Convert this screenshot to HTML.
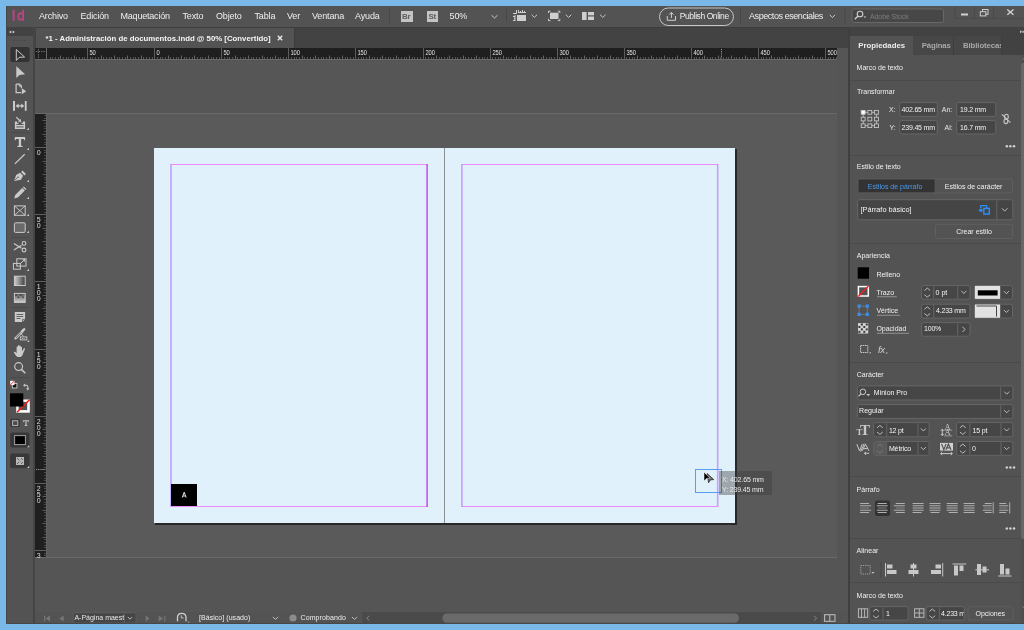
<!DOCTYPE html>
<html><head><meta charset="utf-8">
<style>
*{margin:0;padding:0;box-sizing:border-box}
html{will-change:transform}
html,body{width:1024px;height:630px;overflow:hidden;background:#7ab8e8;font-family:"Liberation Sans",sans-serif;color:#e0e0e0}
.a{position:absolute}
.t{position:absolute;white-space:nowrap;line-height:1}
</style></head><body>
<div class="a" style="left:6px;top:6px;width:1018px;height:618px;background:#535353"></div>
<!-- menubar -->
<div class="a" style="left:6px;top:6px;width:1018px;height:21px;background:#535353"></div>
<div class="a" style="left:6px;top:27px;width:1018px;height:1px;background:#3e3e3e"></div>

<!-- MENUBAR CONTENT -->
<svg class="a" style="left:6px;top:6px" width="30" height="21" viewBox="0 0 30 21">
<rect x="6.6" y="3.8" width="2.1" height="11" fill="#b5477f"/>
<path d="M17.15 3.8 V14.8 M17.15 8.9 C16.5 7.7 15.6 7.25 14.7 7.25 C13.2 7.25 12.35 8.8 12.35 10.6 C12.35 12.5 13.3 13.85 14.7 13.85 C15.6 13.85 16.5 13.4 17.15 12.3" fill="none" stroke="#b5477f" stroke-width="1.9"/>
</svg>
<div class="t" style="left:39px;top:12.3px;font-size:9px;letter-spacing:-0.15px;color:#eeeeee">Archivo</div>
<div class="t" style="left:80.5px;top:12.3px;font-size:9px;letter-spacing:-0.15px;color:#eeeeee">Edición</div>
<div class="t" style="left:120.5px;top:12.3px;font-size:9px;letter-spacing:-0.2px;color:#eeeeee">Maquetación</div>
<div class="t" style="left:182.5px;top:12.3px;font-size:9px;letter-spacing:-0.15px;color:#eeeeee">Texto</div>
<div class="t" style="left:216px;top:12.3px;font-size:9px;letter-spacing:-0.15px;color:#eeeeee">Objeto</div>
<div class="t" style="left:254.5px;top:12.3px;font-size:9px;letter-spacing:-0.15px;color:#eeeeee">Tabla</div>
<div class="t" style="left:287px;top:12.3px;font-size:9px;letter-spacing:-0.15px;color:#eeeeee">Ver</div>
<div class="t" style="left:312px;top:12.3px;font-size:9px;letter-spacing:-0.15px;color:#eeeeee">Ventana</div>
<div class="t" style="left:355px;top:12.3px;font-size:9px;letter-spacing:-0.15px;color:#eeeeee">Ayuda</div>
<div class="a" style="left:389px;top:9px;width:1px;height:14px;background:#474747"></div>
<div class="a" style="left:401px;top:11px;width:12px;height:11px;background:#c4c4c4"></div>
<div class="t" style="left:402px;top:13px;font-size:8px;font-weight:700;color:#5e5e5e;letter-spacing:-0.3px">Br</div>
<div class="a" style="left:427px;top:11px;width:11px;height:11px;background:#c4c4c4"></div>
<div class="t" style="left:428.5px;top:13px;font-size:8px;font-weight:700;color:#5e5e5e;letter-spacing:-0.3px">St</div>
<div class="t" style="left:449.5px;top:12.3px;font-size:9px;color:#eeeeee;letter-spacing:-0.1px">50%</div>
<svg class="a" style="left:0;top:0" width="1024" height="27" viewBox="0 0 1024 27">
<g fill="none" stroke="#c8c8c8" stroke-width="1">
<path d="M491.5 15.2 L494.5 18 L497.5 15.2"/>
<path d="M531.5 14.7 L534.3 17.4 L537.1 14.7"/>
<path d="M565.8 14.7 L568.6 17.4 L571.4 14.7"/>
<path d="M600 14.7 L602.8 17.4 L605.6 14.7"/>
<path d="M829.8 14.8 L832.4 17.6 L835 14.8"/>
</g>
<rect x="506" y="9" width="1" height="13" fill="#474747"/>
<rect x="740" y="9" width="1" height="14" fill="#474747"/>
<rect x="844.5" y="9" width="1" height="14" fill="#474747"/>
<!-- icon1 -->
<g fill="#cfcfcf">
<rect x="517" y="15" width="9" height="6"/>
<rect x="513" y="13" width="4" height="1"/><rect x="516" y="10" width="1" height="4"/>
<rect x="518" y="10" width="1" height="3"/><rect x="520" y="11" width="1" height="2"/><rect x="522" y="10" width="1" height="3"/><rect x="524" y="11" width="1" height="2"/><rect x="518" y="12" width="8" height="1"/>
<rect x="513" y="16" width="2" height="1"/><rect x="514" y="18" width="1" height="1"/><rect x="513" y="20" width="2" height="1"/><rect x="514.5" y="15" width="1" height="6"/>
<!-- icon2 -->
<rect x="550" y="12.7" width="8.5" height="6.3"/>
</g>
<path d="M548.5 13 V11.2 H550.5 M557.8 11.2 H559.8 V13 M559.8 18.8 V20.6 H557.8 M550.5 20.6 H548.5 V18.8" fill="none" stroke="#cfcfcf" stroke-width="1"/>
<g fill="#cfcfcf">
<rect x="582" y="12" width="4.6" height="8"/>
<rect x="588" y="12" width="6" height="3.3"/>
<rect x="588" y="16.5" width="6" height="3.5"/>
</g>
<!-- publish -->
<rect x="659.5" y="8" width="74" height="17.5" rx="8.75" fill="none" stroke="#c6c6c6" stroke-width="1"/>
<path d="M667.3 16 V20.3 H675.5 V16 M671.4 18 V12.5 M669.2 14.6 L671.4 12.4 L673.6 14.6" fill="none" stroke="#cfcfcf" stroke-width="1"/>
<!-- search -->
<rect x="852" y="9" width="91.5" height="13.5" rx="2" fill="#474747" stroke="#686868" stroke-width="1"/>
<circle cx="860" cy="14" r="2.8" fill="none" stroke="#cfcfcf" stroke-width="1.1"/>
<path d="M858 16 L854.8 19.2" stroke="#cfcfcf" stroke-width="1.3"/>
<path d="M863.5 16.5 H866.3 L864.9 18 Z" fill="#cfcfcf"/>
<!-- window controls -->
<path d="M955 6 V18.5 H1024 M974.5 6 V18.5 M993.5 6 V18.5" fill="none" stroke="#4b4b4b" stroke-width="1"/>
<rect x="961" y="13.5" width="7" height="2" fill="#cfcfcf"/>
<rect x="982.5" y="9.5" width="5.5" height="4.8" fill="none" stroke="#cfcfcf" stroke-width="1"/>
<rect x="980.3" y="11.7" width="5.5" height="4.2" fill="#535353" stroke="#cfcfcf" stroke-width="1"/>
<path d="M1007.3 9.5 L1013.5 14.8 M1013.5 9.5 L1007.3 14.8" stroke="#d4d4d4" stroke-width="1.3"/>
</svg>
<div class="t" style="left:679.8px;top:12.3px;font-size:8.5px;color:#eeeeee;letter-spacing:-0.42px">Publish Online</div>
<div class="t" style="left:749px;top:11.5px;font-size:9px;color:#eeeeee;letter-spacing:-0.43px">Aspectos esenciales</div>
<div class="t" style="left:870px;top:12.5px;font-size:7px;color:#7c7c7c;letter-spacing:-0.1px">Adobe Stock</div>

<!-- left toolbar -->
<div class="a" style="left:6px;top:27px;width:27px;height:597px;background:#535353"></div>
<div class="a" style="left:33px;top:27px;width:2px;height:597px;background:#454545"></div>

<!-- TOOLBAR CONTENT -->
<svg class="a" style="left:6px;top:27px" width="27" height="450" viewBox="6 27 27 450">
<rect x="6" y="27" width="27" height="9" fill="#424242"/>
<path d="M9.7 30.5 L12 32 L9.7 33.4 Z M12.6 30.5 L14.9 32 L12.6 33.4 Z" fill="#d0d0d0"/>
<path d="M13 40.3 H27" stroke="#474747" stroke-width="1" stroke-dasharray="2 1.5"/>
<rect x="10.3" y="47.1" width="19.3" height="15" rx="2" fill="#333333"/>
<path d="M16.3 49.5 V60.5 L19.2 57.3 L24.6 57.1 Z" fill="none" stroke="#cacaca" stroke-width="1" stroke-linejoin="miter"/>
<path d="M16.3 66.2 V78 L19.4 75 L25.1 74.3 Z" fill="#cacaca"/>
<path d="M16.1 84.1 H19.5 L21.4 86 V88.3 M16.1 84.1 V92.7 H21.2" fill="none" stroke="#cacaca" stroke-width="1.2"/>
<path d="M19.3 84.1 V86.2 H21.4" fill="none" stroke="#cacaca" stroke-width="0.9"/>
<path d="M21.8 88.3 L26.2 91.3 L21.8 94.3 Z" fill="#cacaca"/>
<rect x="13" y="101" width="2" height="9.8" fill="#cacaca"/>
<rect x="24.8" y="101" width="1.8" height="9.8" fill="#cacaca"/>
<path d="M17 105.9 H22.8" stroke="#cacaca" stroke-width="1.3"/>
<path d="M15.5 105.9 L18.6 103.6 V108.2 Z M24.3 105.9 L21.2 103.6 V108.2 Z" fill="#cacaca"/>
<path d="M14.9 121.4 H17 V122.8 H23 V121.4 H25.1 V128.9 H14.9 Z" fill="#cacaca"/>
<rect x="16.3" y="124" width="7.4" height="1" fill="#5a5a5a"/>
<rect x="16.3" y="126.3" width="7.4" height="1.2" fill="#6a6a6a"/>
<rect x="18.5" y="122.8" width="3" height="1.2" fill="#444"/>
<path d="M16.3 117.3 L19.6 120.4" stroke="#cacaca" stroke-width="1.3"/>
<path d="M21.2 122 L17.9 121.4 L20.6 118.7 Z" fill="#cacaca"/>
<path d="M29 130 H26.8 L29 127.8 Z" fill="#cacaca"/>
<rect x="11" y="132" width="18" height="1" fill="#4a4a4a"/>
<path d="M14.8 137.1 H25.1 V140.3 H24.3 L23.8 138.9 H21.1 V145.7 L22.6 146.1 V147.1 H17.3 V146.1 L18.8 145.7 V138.9 H16.1 L15.6 140.3 H14.8 Z" fill="#cacaca"/>
<path d="M29 150 H26.8 L29 147.8 Z" fill="#cacaca"/>
<path d="M14.9 163.9 L24.7 154.3" stroke="#cacaca" stroke-width="1.3"/>
<path d="M14.1 180.9 L16.1 174.9 L20.1 172.8 L23.1 175.8 L21 179.8 Z" fill="#cacaca"/>
<path d="M21.1 172 L22.5 170.6 L25.9 174 L24.5 175.4 Z" fill="#cacaca"/>
<path d="M14.6 180.4 L17.7 177.5" stroke="#5a5a5a" stroke-width="0.8"/>
<circle cx="18" cy="177.2" r="0.7" fill="#5a5a5a"/>
<path d="M29 182 H26.8 L29 179.8 Z" fill="#cacaca"/>
<path d="M14.2 198.6 L15.2 195.1 L22.2 188.1 L24.8 190.6 L17.8 197.6 Z" fill="#cacaca"/>
<path d="M22.9 187.4 L23.8 186.6 L26.3 189.1 L25.5 189.9 Z" fill="#cacaca"/>
<path d="M29 199 H26.8 L29 196.8 Z" fill="#cacaca"/>
<rect x="14.4" y="205.9" width="10.8" height="9.4" fill="none" stroke="#cacaca" stroke-width="1"/>
<path d="M14.4 205.9 L25.2 215.3 M25.2 205.9 L14.4 215.3" stroke="#cacaca" stroke-width="0.9"/>
<path d="M29 216 H26.8 L29 213.8 Z" fill="#cacaca"/>
<rect x="14.4" y="222.8" width="10.8" height="9.6" rx="1" fill="#6a6a6a" stroke="#cacaca" stroke-width="1"/>
<path d="M29 233 H26.8 L29 230.8 Z" fill="#cacaca"/>
<rect x="11" y="237" width="18" height="1" fill="#4a4a4a"/>
<path d="M13.9 243.5 L21.5 248.2 M13.9 249.9 L21.5 245.3" stroke="#cacaca" stroke-width="1.2"/>
<circle cx="24" cy="243.4" r="1.9" fill="none" stroke="#cacaca" stroke-width="1.1"/>
<circle cx="24" cy="250" r="1.9" fill="none" stroke="#cacaca" stroke-width="1.1"/>
<rect x="16.8" y="258.8" width="9.2" height="7.3" fill="none" stroke="#cacaca" stroke-width="1"/>
<rect x="13.4" y="263.4" width="7" height="5.8" fill="none" stroke="#cacaca" stroke-width="1"/>
<path d="M20.5 263.5 L24.6 259.6" stroke="#cacaca" stroke-width="1"/>
<path d="M25.2 259.1 L22.3 259.6 L24.6 262 Z" fill="#cacaca"/>
<path d="M29 271 H26.8 L29 268.8 Z" fill="#cacaca"/>
<defs><linearGradient id="gr1" x1="0" x2="1"><stop offset="0" stop-color="#cfcfcf"/><stop offset="1" stop-color="#3e3e3e"/></linearGradient>
<linearGradient id="gr2" x1="0" x2="0" y1="0" y2="1"><stop offset="0" stop-color="#555"/><stop offset="1" stop-color="#d0d0d0"/></linearGradient></defs>
<rect x="14.4" y="276.2" width="10.8" height="9.3" fill="url(#gr1)" stroke="#cacaca" stroke-width="1"/>
<rect x="14.4" y="293.4" width="10.8" height="9" fill="url(#gr2)" stroke="#cacaca" stroke-width="1"/><rect x="15.3" y="294.3" width="1.6" height="1.6" fill="#3a3a3a" opacity="0.8"/><rect x="17.6" y="296.5" width="1.6" height="1.6" fill="#3a3a3a" opacity="0.8"/><rect x="19.9" y="294.3" width="1.6" height="1.6" fill="#3a3a3a" opacity="0.8"/><rect x="22.2" y="296.5" width="1.6" height="1.6" fill="#3a3a3a" opacity="0.8"/>
<rect x="11" y="307" width="18" height="1" fill="#4a4a4a"/>
<path d="M14.8 311.9 H25.1 V319.3 L22.5 321.9 H14.8 Z" fill="#cacaca"/>
<path d="M16.5 314.5 H23.3 M16.5 316.5 H23.3 M16.5 318.5 H20.5" stroke="#555" stroke-width="0.9"/>
<path d="M22.5 321.9 V319.3 H25.1" fill="none" stroke="#555" stroke-width="0.8"/>
<path d="M15.5 338.3 L22 331.8" stroke="#cacaca" stroke-width="2.4" stroke-linecap="round"/>
<path d="M15.9 337.9 L21.5 332.3" stroke="#535353" stroke-width="0.9"/>
<path d="M21 330.5 L24.2 327.8 L25.6 329.2 L23 332.4 Z" fill="#cacaca"/>
<path d="M20.3 333 L23.5 336.2" stroke="#cacaca" stroke-width="1"/>
<rect x="20.3" y="336.9" width="6.5" height="3" fill="none" stroke="#cacaca" stroke-width="0.9"/>
<path d="M21.8 338.4 H25.5" stroke="#cacaca" stroke-width="1" stroke-dasharray="1 0.8"/>
<path d="M29.2 342 H27.0 L29.2 339.8 Z" fill="#cacaca"/>
<path d="M17.3 356.9 C15.8 355.6 14.6 353.9 13.9 352.6 C13.6 351.9 14.6 351.4 15.3 352.1 L16.6 353.2 V347.1 C16.6 346.2 17.9 346.2 17.9 347.1 V351 V345.8 C17.9 344.9 19.3 344.9 19.3 345.8 V351 V346.1 C19.3 345.2 20.7 345.2 20.7 346.1 V351 V347.3 C20.7 346.5 22 346.5 22 347.3 V351.5 L23.7 348.6 C24.2 347.8 25.4 348.2 25 349.1 L22.6 354.8 C22.1 356.1 21.3 356.9 20.3 356.9 Z" fill="#cacaca"/>
<circle cx="18.6" cy="366.6" r="3.9" fill="none" stroke="#cacaca" stroke-width="1.2"/>
<path d="M21.4 369.4 L25.3 373.3" stroke="#cacaca" stroke-width="1.5"/>
<rect x="11" y="377" width="18" height="1" fill="#4a4a4a"/>
<rect x="12.3" y="383.4" width="4.6" height="4.6" fill="#111" stroke="#d0d0d0" stroke-width="0.9"/>
<rect x="10.2" y="380.8" width="4.3" height="4.3" fill="#fff"/>
<path d="M10.3 385 L14.4 380.9" stroke="#ff2020" stroke-width="1"/>
<path d="M25 385.3 H26.3 Q27.8 385.3 27.8 386.8 V388.4" fill="none" stroke="#cacaca" stroke-width="1.1"/>
<path d="M23 385.3 L25.2 383.6 V387 Z M27.8 390.6 L26.1 388.3 H29.5 Z" fill="#cacaca"/>
<rect x="16.2" y="399.5" width="13.6" height="13.2" fill="#ffffff"/>
<rect x="18.6" y="401.9" width="8.6" height="8.2" fill="#535353"/>
<path d="M17 412.3 L29.6 399.7" stroke="#ff1a1a" stroke-width="1.5"/>
<rect x="10" y="393.3" width="13.3" height="13.2" fill="#000000"/>
<rect x="10.3" y="418.8" width="9.7" height="8.2" rx="1.5" fill="#3a3a3a"/>
<rect x="12.6" y="420.8" width="5.2" height="4.6" fill="#4a4a4a" stroke="#c0c0c0" stroke-width="0.9"/>
<path d="M23 420.3 H29 V422.3 H28.5 L28.2 421.3 H26.6 V425 L27.4 425.3 V426 H24.6 V425.3 L25.4 425 V421.3 H23.8 L23.5 422.3 H23 Z" fill="#c0c0c0"/>
<rect x="10.2" y="432.6" width="19.3" height="14.9" rx="2" fill="#383838"/>
<rect x="14.6" y="435.6" width="10.8" height="9" fill="#000" stroke="#a0a0a0" stroke-width="1"/>
<path d="M29.2 447.2 H27.0 L29.2 445.0 Z" fill="#cacaca"/>
<rect x="10.2" y="453.4" width="19.3" height="14.9" rx="2" fill="#383838"/>
<rect x="16" y="457" width="8" height="8" fill="#b8b8b8"/>
<path d="M17 458 L19 460 M21 458 L23 460 M17 464 L19 462 M21 464 L23 462 M19.5 460.5 L20.5 461.5" stroke="#555" stroke-width="0.9"/>
<path d="M29.2 468 H27.0 L29.2 465.8 Z" fill="#cacaca"/>
</svg>
<!-- tab bar -->
<div class="a" style="left:35px;top:28px;width:813px;height:20px;background:#434343"></div>
<div class="a" style="left:36px;top:28px;width:258px;height:20px;background:#535353"></div>
<div class="a" style="left:294px;top:28px;width:1px;height:20px;background:#3c3c3c"></div>

<!-- TAB CONTENT -->
<div class="t" style="left:45.5px;top:35px;font-size:7.8px;font-weight:700;color:#f4f4f4">*1 - Administración de documentos.indd @ 50% [Convertido]</div>
<svg class="a" style="left:276px;top:34px" width="10" height="10" viewBox="0 0 10 10"><path d="M1.8 1.8 L6.2 6.2 M6.2 1.8 L1.8 6.2" stroke="#e8e8e8" stroke-width="1.4"/></svg>
<!-- rulers -->
<div class="a" style="left:35px;top:59px;width:802px;height:553px;background:#5a5a5a"></div>
<div class="a" style="left:35px;top:59px;width:802px;height:54px;background:#565656"></div>
<div class="a" style="left:35px;top:558px;width:802px;height:54px;background:#555555"></div>
<div class="a" style="left:35px;top:113px;width:802px;height:1px;background:#6a6a6a"></div>
<div class="a" style="left:35px;top:557px;width:802px;height:1px;background:#6a6a6a"></div>
<svg class="a" style="left:35px;top:48px" width="802" height="12" viewBox="35 48 802 12">
<rect x="35" y="48" width="802" height="11" fill="#1f1f1f"/>
<rect x="35" y="59" width="802" height="1" fill="#6a6a6a"/>
<rect x="46" y="48" width="1" height="11" fill="#6a6a6a"/>
<path d="M38.5 49 V58 M36 51.5 H45" stroke="#6a6a6a" stroke-width="1" stroke-dasharray="1.5 1" fill="none"/>
<path d="M50.5 57 V59 M52.5 57 V59 M55.5 57 V59 M58.5 57 V59 M63.5 57 V59 M66.5 57 V59 M68.5 57 V59 M71.5 57 V59 M76.5 57 V59 M79.5 57 V59 M82.5 57 V59 M84.5 57 V59 M90.5 57 V59 M92.5 57 V59 M95.5 57 V59 M98.5 57 V59 M103.5 57 V59 M106.5 57 V59 M109.5 57 V59 M111.5 57 V59 M117.5 57 V59 M119.5 57 V59 M122.5 57 V59 M125.5 57 V59 M130.5 57 V59 M133.5 57 V59 M135.5 57 V59 M138.5 57 V59 M143.5 57 V59 M146.5 57 V59 M149.5 57 V59 M152.5 57 V59 M157.5 57 V59 M160.5 57 V59 M162.5 57 V59 M165.5 57 V59 M170.5 57 V59 M173.5 57 V59 M176.5 57 V59 M178.5 57 V59 M184.5 57 V59 M186.5 57 V59 M189.5 57 V59 M192.5 57 V59 M197.5 57 V59 M200.5 57 V59 M202.5 57 V59 M205.5 57 V59 M211.5 57 V59 M213.5 57 V59 M216.5 57 V59 M219.5 57 V59 M224.5 57 V59 M227.5 57 V59 M229.5 57 V59 M232.5 57 V59 M237.5 57 V59 M240.5 57 V59 M243.5 57 V59 M245.5 57 V59 M251.5 57 V59 M253.5 57 V59 M256.5 57 V59 M259.5 57 V59 M264.5 57 V59 M267.5 57 V59 M270.5 57 V59 M272.5 57 V59 M278.5 57 V59 M280.5 57 V59 M283.5 57 V59 M286.5 57 V59 M291.5 57 V59 M294.5 57 V59 M296.5 57 V59 M299.5 57 V59 M304.5 57 V59 M307.5 57 V59 M310.5 57 V59 M313.5 57 V59 M318.5 57 V59 M321.5 57 V59 M323.5 57 V59 M326.5 57 V59 M331.5 57 V59 M334.5 57 V59 M337.5 57 V59 M339.5 57 V59 M345.5 57 V59 M347.5 57 V59 M350.5 57 V59 M353.5 57 V59 M358.5 57 V59 M361.5 57 V59 M363.5 57 V59 M366.5 57 V59 M372.5 57 V59 M374.5 57 V59 M377.5 57 V59 M380.5 57 V59 M385.5 57 V59 M388.5 57 V59 M390.5 57 V59 M393.5 57 V59 M398.5 57 V59 M401.5 57 V59 M404.5 57 V59 M406.5 57 V59 M412.5 57 V59 M414.5 57 V59 M417.5 57 V59 M420.5 57 V59 M425.5 57 V59 M428.5 57 V59 M431.5 57 V59 M433.5 57 V59 M439.5 57 V59 M441.5 57 V59 M444.5 57 V59 M447.5 57 V59 M452.5 57 V59 M455.5 57 V59 M457.5 57 V59 M460.5 57 V59 M465.5 57 V59 M468.5 57 V59 M471.5 57 V59 M474.5 57 V59 M479.5 57 V59 M482.5 57 V59 M484.5 57 V59 M487.5 57 V59 M492.5 57 V59 M495.5 57 V59 M498.5 57 V59 M500.5 57 V59 M506.5 57 V59 M508.5 57 V59 M511.5 57 V59 M514.5 57 V59 M519.5 57 V59 M522.5 57 V59 M524.5 57 V59 M527.5 57 V59 M533.5 57 V59 M535.5 57 V59 M538.5 57 V59 M541.5 57 V59 M546.5 57 V59 M549.5 57 V59 M551.5 57 V59 M554.5 57 V59 M559.5 57 V59 M562.5 57 V59 M565.5 57 V59 M567.5 57 V59 M573.5 57 V59 M575.5 57 V59 M578.5 57 V59 M581.5 57 V59 M586.5 57 V59 M589.5 57 V59 M592.5 57 V59 M594.5 57 V59 M600.5 57 V59 M602.5 57 V59 M605.5 57 V59 M608.5 57 V59 M613.5 57 V59 M616.5 57 V59 M618.5 57 V59 M621.5 57 V59 M626.5 57 V59 M629.5 57 V59 M632.5 57 V59 M634.5 57 V59 M640.5 57 V59 M643.5 57 V59 M645.5 57 V59 M648.5 57 V59 M653.5 57 V59 M656.5 57 V59 M659.5 57 V59 M661.5 57 V59 M667.5 57 V59 M669.5 57 V59 M672.5 57 V59 M675.5 57 V59 M680.5 57 V59 M683.5 57 V59 M685.5 57 V59 M688.5 57 V59 M694.5 57 V59 M696.5 57 V59 M699.5 57 V59 M702.5 57 V59 M707.5 57 V59 M710.5 57 V59 M712.5 57 V59 M715.5 57 V59 M720.5 57 V59 M723.5 57 V59 M726.5 57 V59 M728.5 57 V59 M734.5 57 V59 M736.5 57 V59 M739.5 57 V59 M742.5 57 V59 M747.5 57 V59 M750.5 57 V59 M753.5 57 V59 M755.5 57 V59 M761.5 57 V59 M763.5 57 V59 M766.5 57 V59 M769.5 57 V59 M774.5 57 V59 M777.5 57 V59 M779.5 57 V59 M782.5 57 V59 M787.5 57 V59 M790.5 57 V59 M793.5 57 V59 M795.5 57 V59 M801.5 57 V59 M804.5 57 V59 M806.5 57 V59 M809.5 57 V59 M814.5 57 V59 M817.5 57 V59 M820.5 57 V59 M822.5 57 V59 M828.5 57 V59 M830.5 57 V59 M833.5 57 V59 M836.5 57 V59" stroke="#555555" stroke-width="1" fill="none"/>
<path d="M60.5 55.5 V59 M74.5 55.5 V59 M101.5 55.5 V59 M114.5 55.5 V59 M127.5 55.5 V59 M141.5 55.5 V59 M168.5 55.5 V59 M181.5 55.5 V59 M194.5 55.5 V59 M208.5 55.5 V59 M235.5 55.5 V59 M248.5 55.5 V59 M262.5 55.5 V59 M275.5 55.5 V59 M302.5 55.5 V59 M315.5 55.5 V59 M329.5 55.5 V59 M342.5 55.5 V59 M369.5 55.5 V59 M382.5 55.5 V59 M396.5 55.5 V59 M409.5 55.5 V59 M436.5 55.5 V59 M449.5 55.5 V59 M463.5 55.5 V59 M476.5 55.5 V59 M503.5 55.5 V59 M516.5 55.5 V59 M530.5 55.5 V59 M543.5 55.5 V59 M570.5 55.5 V59 M584.5 55.5 V59 M597.5 55.5 V59 M610.5 55.5 V59 M637.5 55.5 V59 M651.5 55.5 V59 M664.5 55.5 V59 M677.5 55.5 V59 M704.5 55.5 V59 M718.5 55.5 V59 M731.5 55.5 V59 M745.5 55.5 V59 M771.5 55.5 V59 M785.5 55.5 V59 M798.5 55.5 V59 M812.5 55.5 V59" stroke="#636363" stroke-width="1" fill="none"/>
<path d="M87.5 48 V59 M154.5 48 V59 M221.5 48 V59 M288.5 48 V59 M355.5 48 V59 M423.5 48 V59 M490.5 48 V59 M557.5 48 V59 M624.5 48 V59 M691.5 48 V59 M758.5 48 V59 M825.5 48 V59" stroke="#5c5c5c" stroke-width="1" fill="none"/>
<text transform="translate(89.4 54.9) scale(0.84 1)" font-size="6.9" fill="#e0e0e0" font-family="Liberation Sans">50</text>
<text transform="translate(156.4 54.9) scale(0.84 1)" font-size="6.9" fill="#e0e0e0" font-family="Liberation Sans">0</text>
<text transform="translate(223.4 54.9) scale(0.84 1)" font-size="6.9" fill="#e0e0e0" font-family="Liberation Sans">50</text>
<text transform="translate(290.4 54.9) scale(0.84 1)" font-size="6.9" fill="#e0e0e0" font-family="Liberation Sans">100</text>
<text transform="translate(357.4 54.9) scale(0.84 1)" font-size="6.9" fill="#e0e0e0" font-family="Liberation Sans">150</text>
<text transform="translate(425.4 54.9) scale(0.84 1)" font-size="6.9" fill="#e0e0e0" font-family="Liberation Sans">200</text>
<text transform="translate(492.4 54.9) scale(0.84 1)" font-size="6.9" fill="#e0e0e0" font-family="Liberation Sans">250</text>
<text transform="translate(559.4 54.9) scale(0.84 1)" font-size="6.9" fill="#e0e0e0" font-family="Liberation Sans">300</text>
<text transform="translate(626.4 54.9) scale(0.84 1)" font-size="6.9" fill="#e0e0e0" font-family="Liberation Sans">350</text>
<text transform="translate(693.4 54.9) scale(0.84 1)" font-size="6.9" fill="#e0e0e0" font-family="Liberation Sans">400</text>
<text transform="translate(760.4 54.9) scale(0.84 1)" font-size="6.9" fill="#e0e0e0" font-family="Liberation Sans">450</text>
<text transform="translate(827.4 54.9) scale(0.84 1)" font-size="6.9" fill="#e0e0e0" font-family="Liberation Sans">500</text>
<path d="M841 54.5 L843 52.5 L845 54.5" fill="none" stroke="#6a6a6a" stroke-width="0.8"/>
<path d="M721.5 49 V58.5" stroke="#9a9a9a" stroke-width="1" stroke-dasharray="1.2 1"/></svg>
<svg class="a" style="left:35px;top:113px" width="12" height="445" viewBox="35 113 12 445">
<rect x="35" y="114" width="11" height="443" fill="#1f1f1f"/>
<rect x="46" y="114" width="1" height="443" fill="#626262"/>
<path d="M44 115.5 H46 M44 118.5 H46 M44 123.5 H46 M44 126.5 H46 M44 128.5 H46 M44 131.5 H46 M44 136.5 H46 M44 139.5 H46 M44 142.5 H46 M44 144.5 H46 M44 150.5 H46 M44 152.5 H46 M44 155.5 H46 M44 158.5 H46 M44 163.5 H46 M44 166.5 H46 M44 169.5 H46 M44 171.5 H46 M44 177.5 H46 M44 179.5 H46 M44 182.5 H46 M44 185.5 H46 M44 190.5 H46 M44 193.5 H46 M44 195.5 H46 M44 198.5 H46 M44 204.5 H46 M44 206.5 H46 M44 209.5 H46 M44 212.5 H46 M44 217.5 H46 M44 220.5 H46 M44 222.5 H46 M44 225.5 H46 M44 230.5 H46 M44 233.5 H46 M44 236.5 H46 M44 238.5 H46 M44 244.5 H46 M44 247.5 H46 M44 249.5 H46 M44 252.5 H46 M44 257.5 H46 M44 260.5 H46 M44 263.5 H46 M44 265.5 H46 M44 271.5 H46 M44 273.5 H46 M44 276.5 H46 M44 279.5 H46 M44 284.5 H46 M44 287.5 H46 M44 289.5 H46 M44 292.5 H46 M44 298.5 H46 M44 300.5 H46 M44 303.5 H46 M44 306.5 H46 M44 311.5 H46 M44 314.5 H46 M44 316.5 H46 M44 319.5 H46 M44 324.5 H46 M44 327.5 H46 M44 330.5 H46 M44 332.5 H46 M44 338.5 H46 M44 341.5 H46 M44 343.5 H46 M44 346.5 H46 M44 351.5 H46 M44 354.5 H46 M44 357.5 H46 M44 359.5 H46 M44 365.5 H46 M44 367.5 H46 M44 370.5 H46 M44 373.5 H46 M44 378.5 H46 M44 381.5 H46 M44 384.5 H46 M44 386.5 H46 M44 392.5 H46 M44 394.5 H46 M44 397.5 H46 M44 400.5 H46 M44 405.5 H46 M44 408.5 H46 M44 410.5 H46 M44 413.5 H46 M44 418.5 H46 M44 421.5 H46 M44 424.5 H46 M44 427.5 H46 M44 432.5 H46 M44 435.5 H46 M44 437.5 H46 M44 440.5 H46 M44 445.5 H46 M44 448.5 H46 M44 451.5 H46 M44 453.5 H46 M44 459.5 H46 M44 461.5 H46 M44 464.5 H46 M44 467.5 H46 M44 472.5 H46 M44 475.5 H46 M44 478.5 H46 M44 480.5 H46 M44 486.5 H46 M44 488.5 H46 M44 491.5 H46 M44 494.5 H46 M44 499.5 H46 M44 502.5 H46 M44 504.5 H46 M44 507.5 H46 M44 512.5 H46 M44 515.5 H46 M44 518.5 H46 M44 521.5 H46 M44 526.5 H46 M44 529.5 H46 M44 531.5 H46 M44 534.5 H46 M44 539.5 H46 M44 542.5 H46 M44 545.5 H46 M44 547.5 H46 M44 553.5 H46 M44 555.5 H46" stroke="#4a4a4a" stroke-width="1" fill="none"/>
<path d="M42.5 120.5 H46 M42.5 134.5 H46 M42.5 161.5 H46 M42.5 174.5 H46 M42.5 187.5 H46 M42.5 201.5 H46 M42.5 228.5 H46 M42.5 241.5 H46 M42.5 255.5 H46 M42.5 268.5 H46 M42.5 295.5 H46 M42.5 308.5 H46 M42.5 322.5 H46 M42.5 335.5 H46 M42.5 362.5 H46 M42.5 375.5 H46 M42.5 389.5 H46 M42.5 402.5 H46 M42.5 429.5 H46 M42.5 443.5 H46 M42.5 456.5 H46 M42.5 469.5 H46 M42.5 496.5 H46 M42.5 510.5 H46 M42.5 523.5 H46 M42.5 537.5 H46" stroke="#5a5a5a" stroke-width="1" fill="none"/>
<path d="M35 147.5 H46 M35 214.5 H46 M35 281.5 H46 M35 349.5 H46 M35 416.5 H46 M35 483.5 H46 M35 550.5 H46" stroke="#5e5e5e" stroke-width="1" fill="none"/>
<text x="36.8" y="154.8" font-size="7" fill="#dedede" font-family="Liberation Sans">0</text>
<text x="36.8" y="221.8" font-size="7" fill="#dedede" font-family="Liberation Sans">5</text>
<text x="36.8" y="228.0" font-size="7" fill="#dedede" font-family="Liberation Sans">0</text>
<text x="36.8" y="288.8" font-size="7" fill="#dedede" font-family="Liberation Sans">1</text>
<text x="36.8" y="295.0" font-size="7" fill="#dedede" font-family="Liberation Sans">0</text>
<text x="36.8" y="301.2" font-size="7" fill="#dedede" font-family="Liberation Sans">0</text>
<text x="36.8" y="356.8" font-size="7" fill="#dedede" font-family="Liberation Sans">1</text>
<text x="36.8" y="363.0" font-size="7" fill="#dedede" font-family="Liberation Sans">5</text>
<text x="36.8" y="369.2" font-size="7" fill="#dedede" font-family="Liberation Sans">0</text>
<text x="36.8" y="423.8" font-size="7" fill="#dedede" font-family="Liberation Sans">2</text>
<text x="36.8" y="430.0" font-size="7" fill="#dedede" font-family="Liberation Sans">0</text>
<text x="36.8" y="436.2" font-size="7" fill="#dedede" font-family="Liberation Sans">0</text>
<text x="36.8" y="490.8" font-size="7" fill="#dedede" font-family="Liberation Sans">2</text>
<text x="36.8" y="497.0" font-size="7" fill="#dedede" font-family="Liberation Sans">5</text>
<text x="36.8" y="503.2" font-size="7" fill="#dedede" font-family="Liberation Sans">0</text>
<text x="36.8" y="557.8" font-size="7" fill="#dedede" font-family="Liberation Sans">3</text>
<text x="36.8" y="564.0" font-size="7" fill="#dedede" font-family="Liberation Sans">0</text>
<text x="36.8" y="570.2" font-size="7" fill="#dedede" font-family="Liberation Sans">0</text>
<path d="M36 469.5 H45" stroke="#9a9a9a" stroke-width="1" stroke-dasharray="1.2 1"/></svg>
<!-- vscroll -->
<div class="a" style="left:837px;top:48px;width:11px;height:564px;background:#555555"></div>
<!-- status bar -->
<div class="a" style="left:35px;top:612px;width:813px;height:12px;background:#535353"></div>
<svg class="a" style="left:35px;top:606px" width="813" height="18" viewBox="35 606 813 18">
<rect x="362.3" y="612.2" width="458.6" height="11" fill="#4a4a4a"/>
<rect x="442.3" y="613.4" width="296.7" height="9.4" rx="4.7" fill="#6a6a6a"/>
<path d="M369.3 615.8 L366.8 618.2 L369.3 620.6 M814 615.8 L816.6 618.2 L814 620.6" fill="none" stroke="#8a8a8a" stroke-width="0.9"/>
<rect x="824.6" y="614.7" width="10.4" height="6.6" fill="none" stroke="#c0c0c0" stroke-width="1"/>
<rect x="829.3" y="614.7" width="1" height="6.6" fill="#c0c0c0"/>
<path d="M840 622.5 L846.5 616 M843 622.5 L846.5 619" stroke="#5e5e5e" stroke-width="0.8"/>
<g fill="#767676">
<rect x="44" y="615.6" width="1.2" height="6"/><path d="M50 615.6 V621.6 L45.6 618.6 Z"/>
<path d="M63.7 615.6 V621.6 L59.3 618.6 Z"/>
<path d="M145.7 615.6 V621.6 L149.5 618.6 Z"/>
<path d="M158.7 615.6 V621.6 L163.2 618.6 Z"/><rect x="164.2" y="615.6" width="1.2" height="6"/>
</g>
<rect x="73.1" y="612.7" width="63" height="10.4" rx="2" fill="#464646" stroke="#5f5f5f" stroke-width="1"/>
<rect x="123.9" y="613.2" width="1" height="9.6" fill="#5f5f5f"/>
<path d="M127.8 617 L130 619.2 L132.2 617" fill="none" stroke="#c8c8c8" stroke-width="0.9"/>
<path d="M272.8 617 L275.5 619.4 L278.2 617 M352 617 L354.6 619.4 L357.2 617" fill="none" stroke="#c8c8c8" stroke-width="0.9"/>
<circle cx="293" cy="618" r="3.6" fill="#8c8c8c"/>
<path d="M177.5 621.3 V617.5 C177.5 614.8 179.5 613.3 181.7 613.3 C184 613.3 186 614.8 186 617.5 V621.3" fill="none" stroke="#cfcfcf" stroke-width="1.3"/>
<path d="M181.3 615.3 V618 H183.5" fill="none" stroke="#cfcfcf" stroke-width="0.9"/>
<path d="M187.5 621.8 H189.5 L188.5 622.8 Z" fill="#cfcfcf"/>
</svg>
<div class="a" style="left:74px;top:613px;width:49.5px;height:10px;overflow:hidden"><div class="t" style="left:0.4px;top:1.4px;font-size:7px;color:#e8e8e8">A-Página maestra</div></div>
<div class="t" style="left:199px;top:614.1px;font-size:7px;color:#eeeeee;letter-spacing:0.05px">[Básico] (usado)</div>
<div class="t" style="left:300.5px;top:614.1px;font-size:7px;color:#eeeeee;letter-spacing:0.1px">Comprobando</div>
<div class="a" style="left:848px;top:27px;width:2px;height:597px;background:#3f3f3f"></div>
<!-- right panel -->
<!-- PANEL CONTENT -->
<svg class="a" style="left:850px;top:27px" width="174" height="597" viewBox="850 27 174 597">
<rect x="850" y="27" width="174" height="28" fill="#424242"/>
<path d="M1020 30.3 L1022 31.8 L1020 33.3 Z M1022.5 30.3 L1024.5 31.8 L1022.5 33.3 Z" fill="#c8c8c8"/>
<rect x="850" y="36" width="63" height="19" fill="#535353"/>
<rect x="913" y="36" width="41" height="19" fill="#474747"/>
<rect x="954" y="36" width="47" height="19" fill="#474747"/>
<rect x="953" y="36" width="1" height="19" fill="#3e3e3e"/>
<rect x="1001" y="36" width="1" height="19" fill="#3e3e3e"/>
<rect x="1021" y="55" width="3" height="569" fill="#4e4e4e"/>
<rect x="1021" y="63" width="4" height="476" rx="2" fill="#676767"/>
<path d="M1022 60 L1023.5 58.5 L1025 60" fill="none" stroke="#888" stroke-width="0.8"/>
<path d="M1022 606 L1023.5 607.5 L1025 606" fill="none" stroke="#888" stroke-width="0.8"/>
<rect x="850" y="80" width="171" height="1" fill="#4a4a4a"/>
<rect x="861.2" y="110.5" width="3.9" height="3.7" fill="#ffffff" stroke="#cfcfcf" stroke-width="0.8"/>
<rect x="867.9" y="110.5" width="3.9" height="3.7" fill="none" stroke="#cfcfcf" stroke-width="0.8"/>
<rect x="874.6" y="110.5" width="3.9" height="3.7" fill="none" stroke="#cfcfcf" stroke-width="0.8"/>
<rect x="861.2" y="117.2" width="3.9" height="3.7" fill="none" stroke="#cfcfcf" stroke-width="0.8"/>
<rect x="867.9" y="117.2" width="3.9" height="3.7" fill="none" stroke="#cfcfcf" stroke-width="0.8"/>
<rect x="874.6" y="117.2" width="3.9" height="3.7" fill="none" stroke="#cfcfcf" stroke-width="0.8"/>
<rect x="861.2" y="123.9" width="3.9" height="3.7" fill="none" stroke="#cfcfcf" stroke-width="0.8"/>
<rect x="867.9" y="123.9" width="3.9" height="3.7" fill="none" stroke="#cfcfcf" stroke-width="0.8"/>
<rect x="874.6" y="123.9" width="3.9" height="3.7" fill="none" stroke="#cfcfcf" stroke-width="0.8"/>
<path d="M865.1 112.3 H867.9 M871.8 112.3 H874.6 M865.1 125.7 H867.9 M871.8 125.7 H874.6 M863.2 114.2 V117.2 M863.2 120.9 V123.9 M876.6 114.2 V117.2 M876.6 120.9 V123.9" stroke="#cfcfcf" stroke-width="0.8"/>
<rect x="899.7" y="102.60000000000001" width="37.6" height="13.799999999999988" rx="2" fill="#464646" stroke="#666666" stroke-width="1"/>
<rect x="899.7" y="120.60000000000001" width="37.6" height="13.399999999999983" rx="2" fill="#464646" stroke="#666666" stroke-width="1"/>
<rect x="956.7" y="102.60000000000001" width="39.1" height="13.799999999999988" rx="2" fill="#464646" stroke="#666666" stroke-width="1"/>
<rect x="956.7" y="120.60000000000001" width="39.1" height="13.399999999999983" rx="2" fill="#464646" stroke="#666666" stroke-width="1"/>
<ellipse cx="1006.4" cy="116.8" rx="1.9" ry="2.5" fill="none" stroke="#c4c4c4" stroke-width="1.1"/>
<ellipse cx="1005.9" cy="121.3" rx="1.9" ry="2.3" fill="none" stroke="#c4c4c4" stroke-width="1.1"/>
<path d="M1001.9 114.4 L1010.4 122.6" stroke="#c4c4c4" stroke-width="1.2"/>
<circle cx="1006.8" cy="146.3" r="1.25" fill="#d0d0d0"/>
<circle cx="1010.4" cy="146.3" r="1.25" fill="#d0d0d0"/>
<circle cx="1014.0" cy="146.3" r="1.25" fill="#d0d0d0"/>
<rect x="850" y="155" width="171" height="1" fill="#4a4a4a"/>
<rect x="858" y="179" width="154.5" height="13.8" rx="2" fill="#535353" stroke="#5f5f5f" stroke-width="1"/>
<rect x="858.5" y="179.5" width="76" height="12.8" fill="#333333"/>
<rect x="857.7" y="199.7" width="155.1" height="20.1" rx="2" fill="#454545" stroke="#666666" stroke-width="1"/>
<rect x="996.3" y="200.5" width="1" height="18.5" fill="#666666"/>
<path d="M980.8 208.2 V205.7 H986.6 V208.6" fill="none" stroke="#2f8cf0" stroke-width="1.3"/>
<rect x="983.8" y="208.4" width="5.5" height="5.6" fill="none" stroke="#2f8cf0" stroke-width="1.5"/>
<path d="M978 210.3 L981.8 208.2 V212.4 Z" fill="#2f8cf0"/>
<path d="M981 210.3 H983.5" stroke="#2f8cf0" stroke-width="1.2"/>
<path d="M1001.95 208.29999999999998 L1004.7 211.1 L1007.45 208.29999999999998" fill="none" stroke="#c8c8c8" stroke-width="0.9"/>
<rect x="935.5" y="224.3" width="77" height="14.2" rx="2" fill="none" stroke="#5f5f5f" stroke-width="1"/>
<rect x="850" y="243" width="171" height="1" fill="#4a4a4a"/>
<rect x="857.7" y="267.3" width="11.3" height="11.4" fill="#000"/>
<rect x="858.4" y="286.6" width="9.9" height="9.4" fill="#535353" stroke="#ffffff" stroke-width="1.5"/>
<path d="M858.2 296.5 L868.5 286" stroke="#ff1a1a" stroke-width="1.3"/>
<rect x="877" y="296.3" width="19.8" height="0.9" fill="#9a9a9a"/>
<rect x="921.6" y="285.59999999999997" width="48.40000000000007" height="13.6" rx="2" fill="#464646" stroke="#666666" stroke-width="1"/>
<rect x="933.2" y="286.4" width="1" height="12.0" fill="#666666"/>
<rect x="957.2" y="286.4" width="1" height="12.0" fill="#666666"/>
<path d="M924.4 290.49999999999994 L927.3 288.09999999999997 L930.1999999999999 290.49999999999994" fill="none" stroke="#c8c8c8" stroke-width="0.9"/>
<path d="M924.4 294.7 L927.3 297.09999999999997 L930.1999999999999 294.7" fill="none" stroke="#c8c8c8" stroke-width="0.9"/>
<path d="M961.3 290.9 L963.8 293.5 L966.3 290.9" fill="none" stroke="#c8c8c8" stroke-width="0.9"/>
<rect x="974.6" y="285.59999999999997" width="37.90000000000007" height="13.6" rx="2" fill="#464646" stroke="#666666" stroke-width="1"/>
<rect x="1000" y="286.4" width="1" height="12.0" fill="#666666"/>
<rect x="974.9" y="285.9" width="25.1" height="13" fill="#e2e2e2"/>
<rect x="977.8" y="290.3" width="19.8" height="5.2" fill="#000"/>
<path d="M1003.9 291.09999999999997 L1006.4 293.7 L1008.9 291.09999999999997" fill="none" stroke="#c8c8c8" stroke-width="0.9"/>
<rect x="857.5" y="304.5" width="3.2" height="3.2" fill="#3a8ee8"/>
<rect x="865.7" y="304.5" width="3.2" height="3.2" fill="#3a8ee8"/>
<rect x="857.5" y="312.8" width="3.2" height="3.2" fill="#3a8ee8"/>
<rect x="865.7" y="312.8" width="3.2" height="3.2" fill="#3a8ee8"/>
<path d="M860.7 306.1 H865.7 M860.7 314.4 H865.7 M859.1 307.7 V312.8 M867.3 307.7 V312.8" stroke="#b0b0b0" stroke-width="0.7" stroke-dasharray="1 1"/>
<rect x="877" y="314.8" width="23" height="0.9" fill="#9a9a9a"/>
<rect x="921.6" y="304.2" width="48.40000000000007" height="13.900000000000011" rx="2" fill="#464646" stroke="#666666" stroke-width="1"/>
<rect x="933.2" y="305" width="1" height="12.300000000000011" fill="#666666"/>
<path d="M924.4 309.24999999999994 L927.3 306.84999999999997 L930.1999999999999 309.24999999999994" fill="none" stroke="#c8c8c8" stroke-width="0.9"/>
<path d="M924.4 313.45 L927.3 315.84999999999997 L930.1999999999999 313.45" fill="none" stroke="#c8c8c8" stroke-width="0.9"/>
<rect x="974.6" y="304.2" width="37.90000000000007" height="13.900000000000011" rx="2" fill="#464646" stroke="#666666" stroke-width="1"/>
<rect x="1000" y="305" width="1" height="12.300000000000011" fill="#666666"/>
<rect x="974.9" y="304.5" width="25.1" height="13.3" fill="#e2e2e2"/>
<path d="M976.5 306 H996.5 V316.5" fill="none" stroke="#444" stroke-width="1"/>
<path d="M1003.9 309.9 L1006.4 312.5 L1008.9 309.9" fill="none" stroke="#c8c8c8" stroke-width="0.9"/>
<rect x="858" y="323.1" width="10.2" height="10.4" fill="#d4d4d4"/>
<rect x="858.40" y="325.95" width="2" height="2" fill="#3a3a3a"/>
<rect x="858.40" y="330.85" width="2" height="2" fill="#3a3a3a"/>
<rect x="860.85" y="323.50" width="2" height="2" fill="#3a3a3a"/>
<rect x="860.85" y="328.40" width="2" height="2" fill="#3a3a3a"/>
<rect x="863.30" y="325.95" width="2" height="2" fill="#3a3a3a"/>
<rect x="863.30" y="330.85" width="2" height="2" fill="#3a3a3a"/>
<rect x="865.75" y="323.50" width="2" height="2" fill="#3a3a3a"/>
<rect x="865.75" y="328.40" width="2" height="2" fill="#3a3a3a"/>
<rect x="877" y="332.8" width="32" height="0.9" fill="#9a9a9a"/>
<rect x="921.6" y="322.7" width="48.40000000000007" height="13.499999999999977" rx="2" fill="#464646" stroke="#666666" stroke-width="1"/>
<rect x="957.2" y="323.5" width="1" height="11.899999999999977" fill="#666666"/>
<path d="M962.5 326.8 L965 329.4 L962.5 332" fill="none" stroke="#c8c8c8" stroke-width="0.9"/>
<rect x="860.6" y="345.5" width="7.2" height="7" fill="none" stroke="#c8c8c8" stroke-width="1" stroke-dasharray="1.6 0.6"/>
<path d="M869.5 352.8 H871" stroke="#c8c8c8" stroke-width="1"/>
<path d="M885.8 353 H887.5" stroke="#c8c8c8" stroke-width="1"/>
<rect x="850" y="362" width="171" height="1" fill="#4a4a4a"/>
<rect x="857.4000000000001" y="385.9" width="155.49999999999997" height="14.1" rx="2" fill="#464646" stroke="#666666" stroke-width="1"/>
<rect x="1000.2" y="386.7" width="1" height="12.5" fill="#666666"/>
<circle cx="862.9" cy="391.8" r="2.8" fill="none" stroke="#c8c8c8" stroke-width="1"/>
<path d="M860.9 393.9 L858.5 396.4" stroke="#c8c8c8" stroke-width="1.2"/>
<path d="M866.3 394.1 H870.2 L868.25 396.2 Z" fill="#c8c8c8"/>
<path d="M1004.2 391.59999999999997 L1006.7 394.2 L1009.2 391.59999999999997" fill="none" stroke="#c8c8c8" stroke-width="0.9"/>
<rect x="857.4000000000001" y="404.59999999999997" width="155.49999999999997" height="13.800000000000045" rx="2" fill="#464646" stroke="#666666" stroke-width="1"/>
<rect x="1000.2" y="405.4" width="1" height="12.200000000000045" fill="#666666"/>
<path d="M1004.2 410.2 L1006.7 412.8 L1009.2 410.2" fill="none" stroke="#c8c8c8" stroke-width="0.9"/>
<rect x="873.7" y="422.59999999999997" width="55.399999999999956" height="14.200000000000022" rx="2" fill="#464646" stroke="#666666" stroke-width="1"/>
<rect x="886.2" y="423.4" width="1" height="12.600000000000023" fill="#666666"/>
<rect x="917.5" y="423.4" width="1" height="12.600000000000023" fill="#666666"/>
<path d="M877.0 427.79999999999995 L879.9 425.4 L882.8 427.79999999999995" fill="none" stroke="#c8c8c8" stroke-width="0.9"/>
<path d="M877.0 432.0 L879.9 434.4 L882.8 432.0" fill="none" stroke="#c8c8c8" stroke-width="0.9"/>
<path d="M920.9 428.4 L923.4 431.0 L925.9 428.4" fill="none" stroke="#c8c8c8" stroke-width="0.9"/>
<path d="M942.3 429.3 V435.4 M940.9 430.7 L942.3 429.1 L943.7 430.7 M940.9 434 L942.3 435.6 L943.7 434" fill="none" stroke="#c8c8c8" stroke-width="1"/>
<path d="M944.2 430.2 H952.2 M944.2 435.9 H952.2" stroke="#b8b8b8" stroke-width="0.7"/>
<rect x="956.6" y="422.59999999999997" width="56.200000000000024" height="14.200000000000022" rx="2" fill="#464646" stroke="#666666" stroke-width="1"/>
<rect x="969.3" y="423.4" width="1" height="12.600000000000023" fill="#666666"/>
<rect x="1000.5" y="423.4" width="1" height="12.600000000000023" fill="#666666"/>
<path d="M959.9 427.79999999999995 L962.8 425.4 L965.6999999999999 427.79999999999995" fill="none" stroke="#c8c8c8" stroke-width="0.9"/>
<path d="M959.9 432.0 L962.8 434.4 L965.6999999999999 432.0" fill="none" stroke="#c8c8c8" stroke-width="0.9"/>
<path d="M1004.2 428.4 L1006.7 431.0 L1009.2 428.4" fill="none" stroke="#c8c8c8" stroke-width="0.9"/>
<path d="M856.8 444.2 L859.5 450.8 L862.2 444.2 M862.2 450.8 L865.5 444.2 L868.9 450.8 M863.6 448.6 H867.4 M860.6 451.6 L864.2 443.6" fill="none" stroke="#c8c8c8" stroke-width="1"/>
<path d="M864.5 453.3 H869 M866 451.9 L864.4 453.3 L866 454.7" fill="none" stroke="#c8c8c8" stroke-width="1"/>
<rect x="873.7" y="441.5" width="55.399999999999956" height="13.799999999999988" rx="2" fill="#464646" stroke="#666666" stroke-width="1"/>
<rect x="886.2" y="442.3" width="1" height="12.199999999999989" fill="#666666"/>
<rect x="917.5" y="442.3" width="1" height="12.199999999999989" fill="#666666"/>
<rect x="874" y="441.8" width="12.2" height="13.2" rx="1.5" fill="#5a5a5a"/>
<path d="M877.0 446.49999999999994 L879.9 444.09999999999997 L882.8 446.49999999999994" fill="none" stroke="#7a7a7a" stroke-width="0.9"/>
<path d="M877.0 450.7 L879.9 453.09999999999997 L882.8 450.7" fill="none" stroke="#7a7a7a" stroke-width="0.9"/>
<path d="M920.9 447.09999999999997 L923.4 449.7 L925.9 447.09999999999997" fill="none" stroke="#c8c8c8" stroke-width="0.9"/>
<rect x="940" y="442.9" width="13" height="7.7" fill="#cfcfcf"/>
<path d="M941.6 443.9 L943.8 449.7 L946 443.9 M945.9 449.7 L948.4 443.9 L951 449.7 M947 447.8 H949.9" fill="none" stroke="#535353" stroke-width="1.2"/>
<path d="M940.8 453.6 H952.2 M942.2 452.1 L940.6 453.6 L942.2 455.1 M950.8 452.1 L952.4 453.6 L950.8 455.1" fill="none" stroke="#c8c8c8" stroke-width="1"/>
<rect x="956.6" y="441.5" width="56.200000000000024" height="13.799999999999988" rx="2" fill="#464646" stroke="#666666" stroke-width="1"/>
<rect x="969.3" y="442.3" width="1" height="12.199999999999989" fill="#666666"/>
<rect x="1000.5" y="442.3" width="1" height="12.199999999999989" fill="#666666"/>
<path d="M959.9 446.49999999999994 L962.8 444.09999999999997 L965.6999999999999 446.49999999999994" fill="none" stroke="#c8c8c8" stroke-width="0.9"/>
<path d="M959.9 450.7 L962.8 453.09999999999997 L965.6999999999999 450.7" fill="none" stroke="#c8c8c8" stroke-width="0.9"/>
<path d="M1004.2 447.09999999999997 L1006.7 449.7 L1009.2 447.09999999999997" fill="none" stroke="#c8c8c8" stroke-width="0.9"/>
<circle cx="1006.8" cy="467.6" r="1.25" fill="#d0d0d0"/>
<circle cx="1010.4" cy="467.6" r="1.25" fill="#d0d0d0"/>
<circle cx="1014.0" cy="467.6" r="1.25" fill="#d0d0d0"/>
<rect x="850" y="476" width="171" height="1" fill="#4a4a4a"/>
<rect x="875" y="500.6" width="15" height="15.3" rx="2" fill="#333333"/>
<rect x="860.1" y="503.00" width="9" height="1" fill="#b0b0b0"/>
<rect x="860.1" y="505.25" width="11" height="1" fill="#b0b0b0"/>
<rect x="860.1" y="507.50" width="9" height="1" fill="#858585"/>
<rect x="860.1" y="509.75" width="11" height="1" fill="#b0b0b0"/>
<rect x="860.1" y="512.00" width="9" height="1" fill="#b0b0b0"/>
<rect x="877.7" y="503.00" width="9" height="1" fill="#b0b0b0"/>
<rect x="876.7" y="505.25" width="11" height="1" fill="#b0b0b0"/>
<rect x="877.7" y="507.50" width="9" height="1" fill="#858585"/>
<rect x="876.7" y="509.75" width="11" height="1" fill="#b0b0b0"/>
<rect x="877.7" y="512.00" width="9" height="1" fill="#b0b0b0"/>
<rect x="895.8" y="503.00" width="9" height="1" fill="#b0b0b0"/>
<rect x="893.8" y="505.25" width="11" height="1" fill="#b0b0b0"/>
<rect x="895.8" y="507.50" width="9" height="1" fill="#858585"/>
<rect x="893.8" y="509.75" width="11" height="1" fill="#b0b0b0"/>
<rect x="895.8" y="512.00" width="9" height="1" fill="#b0b0b0"/>
<rect x="912.6" y="503.00" width="11" height="1" fill="#b0b0b0"/>
<rect x="912.6" y="505.25" width="11" height="1" fill="#b0b0b0"/>
<rect x="912.6" y="507.50" width="11" height="1" fill="#b0b0b0"/>
<rect x="912.6" y="509.75" width="11" height="1" fill="#b0b0b0"/>
<rect x="912.6" y="512.00" width="9" height="1" fill="#b0b0b0"/>
<rect x="929.5" y="503.00" width="11" height="1" fill="#b0b0b0"/>
<rect x="929.5" y="505.25" width="11" height="1" fill="#b0b0b0"/>
<rect x="929.5" y="507.50" width="11" height="1" fill="#b0b0b0"/>
<rect x="929.5" y="509.75" width="11" height="1" fill="#b0b0b0"/>
<rect x="930.5" y="512.00" width="9" height="1" fill="#b0b0b0"/>
<rect x="946.7" y="503.00" width="11" height="1" fill="#b0b0b0"/>
<rect x="946.7" y="505.25" width="11" height="1" fill="#b0b0b0"/>
<rect x="946.7" y="507.50" width="11" height="1" fill="#b0b0b0"/>
<rect x="946.7" y="509.75" width="11" height="1" fill="#b0b0b0"/>
<rect x="948.7" y="512.00" width="9" height="1" fill="#b0b0b0"/>
<rect x="963.6" y="503.00" width="11" height="1" fill="#b0b0b0"/>
<rect x="963.6" y="505.25" width="11" height="1" fill="#b0b0b0"/>
<rect x="963.6" y="507.50" width="11" height="1" fill="#b0b0b0"/>
<rect x="963.6" y="509.75" width="11" height="1" fill="#b0b0b0"/>
<rect x="963.6" y="512.00" width="11" height="1" fill="#b0b0b0"/>
<rect x="984.7" y="503.00" width="7" height="1" fill="#b0b0b0"/>
<rect x="982.7" y="505.25" width="9" height="1" fill="#b0b0b0"/>
<rect x="983.7" y="507.50" width="8" height="1" fill="#858585"/>
<rect x="982.7" y="509.75" width="9" height="1" fill="#b0b0b0"/>
<rect x="984.7" y="512.00" width="7" height="1" fill="#b0b0b0"/>
<rect x="992.7" y="502.3" width="0.9" height="11.2" fill="#b8b8b8"/>
<rect x="999.3" y="503.00" width="7" height="1" fill="#b0b0b0"/>
<rect x="999.3" y="505.25" width="9" height="1" fill="#b0b0b0"/>
<rect x="999.3" y="507.50" width="8" height="1" fill="#858585"/>
<rect x="999.3" y="509.75" width="9" height="1" fill="#b0b0b0"/>
<rect x="999.3" y="512.00" width="7" height="1" fill="#b0b0b0"/>
<rect x="1009.3" y="502.3" width="0.9" height="11.2" fill="#b8b8b8"/>
<circle cx="1006.8" cy="528.4" r="1.25" fill="#d0d0d0"/>
<circle cx="1010.4" cy="528.4" r="1.25" fill="#d0d0d0"/>
<circle cx="1014.0" cy="528.4" r="1.25" fill="#d0d0d0"/>
<rect x="850" y="538" width="171" height="1" fill="#4a4a4a"/>
<rect x="860.8" y="565.5" width="9.4" height="8.5" fill="none" stroke="#b8b8b8" stroke-width="0.8" stroke-dasharray="1.2 1"/>
<path d="M871.5 572 H874.5 L873 573.8 Z" fill="#c8c8c8"/>
<rect x="880.5" y="561" width="1" height="17" fill="#484848"/>
<rect x="885" y="563" width="1" height="13.5" fill="#c8c8c8"/>
<rect x="887" y="564.5" width="5.5" height="4" fill="#c8c8c8"/><rect x="887" y="570" width="9.5" height="4" fill="#c8c8c8"/>
<rect x="913" y="563" width="1" height="13.5" fill="#c8c8c8"/>
<rect x="910.5" y="564.5" width="6" height="4" fill="#c8c8c8"/><rect x="908.5" y="570" width="10" height="4" fill="#c8c8c8"/>
<rect x="942.2" y="563" width="1" height="13.5" fill="#c8c8c8"/>
<rect x="935.5" y="564.5" width="5.5" height="4" fill="#c8c8c8"/><rect x="931" y="570" width="10" height="4" fill="#c8c8c8"/>
<rect x="952.5" y="563.5" width="13.8" height="1" fill="#c8c8c8"/>
<rect x="954" y="565.5" width="4" height="10" fill="#c8c8c8"/><rect x="959.5" y="565.5" width="4" height="5.5" fill="#c8c8c8"/>
<rect x="975.3" y="569.3" width="13.7" height="1" fill="#c8c8c8"/>
<rect x="977" y="564" width="4" height="11" fill="#c8c8c8"/><rect x="982.5" y="566.5" width="4" height="6" fill="#c8c8c8"/>
<rect x="998.2" y="575.5" width="13.3" height="1" fill="#c8c8c8"/>
<rect x="1000" y="564" width="4" height="10.5" fill="#c8c8c8"/><rect x="1005.5" y="568.5" width="4" height="6" fill="#c8c8c8"/>
<rect x="850" y="582" width="171" height="1" fill="#4a4a4a"/>
<rect x="858.4" y="608.8" width="9.3" height="8.5" fill="none" stroke="#c0c0c0" stroke-width="0.9"/>
<path d="M861.5 608.8 V617.3 M864.6 608.8 V617.3" stroke="#c0c0c0" stroke-width="0.9"/>
<rect x="869.8000000000001" y="606.6" width="38.29999999999993" height="13.499999999999977" rx="2" fill="#464646" stroke="#666666" stroke-width="1"/>
<rect x="882.5" y="607.4" width="1" height="11.899999999999977" fill="#666666"/>
<path d="M873.1 611.4499999999999 L876 609.0499999999998 L878.9 611.4499999999999" fill="none" stroke="#c8c8c8" stroke-width="0.9"/>
<path d="M873.1 615.6499999999999 L876 618.05 L878.9 615.6499999999999" fill="none" stroke="#c8c8c8" stroke-width="0.9"/>
<rect x="914.6" y="608.8" width="9.3" height="8.5" fill="none" stroke="#c0c0c0" stroke-width="0.9"/>
<path d="M919.25 608.8 V617.3 M914.6 613 H923.9" stroke="#c0c0c0" stroke-width="0.9"/>
<rect x="926.1" y="606.6" width="38.200000000000024" height="13.499999999999977" rx="2" fill="#464646" stroke="#666666" stroke-width="1"/>
<rect x="938.8" y="607.4" width="1" height="11.899999999999977" fill="#666666"/>
<path d="M929.4 611.4499999999999 L932.3 609.0499999999998 L935.1999999999999 611.4499999999999" fill="none" stroke="#c8c8c8" stroke-width="0.9"/>
<path d="M929.4 615.6499999999999 L932.3 618.05 L935.1999999999999 615.6499999999999" fill="none" stroke="#c8c8c8" stroke-width="0.9"/>
<rect x="968" y="606.8" width="45.2" height="13.2" rx="2" fill="none" stroke="#5f5f5f" stroke-width="1"/>
</svg>
<div class="t" style="left:858.3px;top:42.20px;font-size:7.8px;color:#ececec;font-weight:700;letter-spacing:0px">Propiedades</div>
<div class="t" style="left:921.8px;top:42.20px;font-size:7.8px;color:#a8a8a8;font-weight:700;letter-spacing:-0.15px">Páginas</div>
<div class="a" style="left:954px;top:37px;width:47px;height:18px;overflow:hidden">
<div class="t" style="left:9px;top:5.20px;font-size:7.8px;color:#a8a8a8;font-weight:700;letter-spacing:-0.1px">Bibliotecas</div>
</div>
<div class="t" style="left:856.6px;top:63.97px;font-size:7px;color:#f0f0f0;font-weight:400;letter-spacing:0px">Marco de texto</div>
<div class="t" style="left:856.9px;top:87.87px;font-size:7px;color:#f0f0f0;font-weight:400;letter-spacing:0px">Transformar</div>
<div class="t" style="left:889px;top:105.97px;font-size:7px;color:#e6e6e6;font-weight:400;letter-spacing:0px">X:</div>
<div class="t" style="left:889.5px;top:123.67px;font-size:7px;color:#e6e6e6;font-weight:400;letter-spacing:0px">Y:</div>
<div class="t" style="left:901.6px;top:105.97px;font-size:7px;color:#f4f4f4;font-weight:400;letter-spacing:-0.2px">402.65 mm</div>
<div class="t" style="left:901.6px;top:123.67px;font-size:7px;color:#f4f4f4;font-weight:400;letter-spacing:-0.2px">239.45 mm</div>
<div class="t" style="left:941.8px;top:106.07px;font-size:7px;color:#e6e6e6;font-weight:400;letter-spacing:0px">An:</div>
<div class="t" style="left:944.6px;top:123.67px;font-size:7px;color:#e6e6e6;font-weight:400;letter-spacing:0px">Al:</div>
<div class="t" style="left:960.1px;top:105.97px;font-size:7px;color:#f4f4f4;font-weight:400;letter-spacing:-0.2px">19.2 mm</div>
<div class="t" style="left:960.1px;top:123.67px;font-size:7px;color:#f4f4f4;font-weight:400;letter-spacing:-0.2px">16.7 mm</div>
<div class="t" style="left:856.8px;top:163.47px;font-size:7px;color:#f0f0f0;font-weight:400;letter-spacing:0px">Estilo de texto</div>
<div class="t" style="left:867.8px;top:182.67px;font-size:7px;color:#4a9cf0;font-weight:400;letter-spacing:0px">Estilos de párrafo</div>
<div class="t" style="left:944.8px;top:182.67px;font-size:7px;color:#f0f0f0;font-weight:400;letter-spacing:0px">Estilos de carácter</div>
<div class="t" style="left:860.5px;top:205.72px;font-size:7.3px;color:#f4f4f4;font-weight:400;letter-spacing:0px">[Párrafo básico]</div>
<div class="t" style="left:956.2px;top:227.57px;font-size:7px;color:#f0f0f0;font-weight:400;letter-spacing:0px">Crear estilo</div>
<div class="t" style="left:856.8px;top:251.57px;font-size:7px;color:#f0f0f0;font-weight:400;letter-spacing:0px">Apariencia</div>
<div class="t" style="left:876.4px;top:270.57px;font-size:7px;color:#f0f0f0;font-weight:400;letter-spacing:0px">Relleno</div>
<div class="t" style="left:876.4px;top:288.57px;font-size:7px;color:#f0f0f0;font-weight:400;letter-spacing:0px">Trazo</div>
<div class="t" style="left:935.6px;top:288.77px;font-size:7px;color:#f4f4f4;font-weight:400;letter-spacing:0px">0 pt</div>
<div class="t" style="left:876.4px;top:307.07px;font-size:7px;color:#f0f0f0;font-weight:400;letter-spacing:0px">Vértice</div>
<div class="t" style="left:936px;top:307.07px;font-size:7px;color:#f4f4f4;font-weight:400;letter-spacing:-0.2px">4.233 mm</div>
<div class="t" style="left:876.4px;top:325.07px;font-size:7px;color:#f0f0f0;font-weight:400;letter-spacing:0px">Opacidad</div>
<div class="t" style="left:924px;top:325.07px;font-size:7px;color:#f4f4f4;font-weight:400;letter-spacing:-0.2px">100%</div>
<div class="t" style="left:878px;top:344.86px;font-size:9.5px;color:#d0d0d0;font-weight:400;letter-spacing:-0.3px;font-style:italic;font-family:'Liberation Sans',sans-serif">fx</div>
<div class="t" style="left:856.8px;top:371.17px;font-size:7px;color:#f0f0f0;font-weight:400;letter-spacing:0px">Carácter</div>
<div class="t" style="left:873.8px;top:389.27px;font-size:7px;color:#f4f4f4;font-weight:400;letter-spacing:0px">Minion Pro</div>
<div class="t" style="left:859.1px;top:407.37px;font-size:7px;color:#f4f4f4;font-weight:400;letter-spacing:0px">Regular</div>
<div class="t" style="left:856.4px;top:427.75px;font-size:8.8px;color:#c8c8c8;font-weight:700;letter-spacing:0px;font-family:'Liberation Serif',serif">T</div>
<div class="t" style="left:859.9px;top:422.50px;font-size:15px;color:#c8c8c8;font-weight:700;letter-spacing:0px;font-family:'Liberation Serif',serif">T</div>
<div class="t" style="left:888.9px;top:426.57px;font-size:7px;color:#f4f4f4;font-weight:400;letter-spacing:-0.2px">12 pt</div>
<div class="t" style="left:944.6px;top:422.50px;font-size:8.5px;color:#c8c8c8;font-weight:400;letter-spacing:0px;font-family:'Liberation Serif',serif">A</div>
<div class="t" style="left:944.6px;top:428.20px;font-size:8.5px;color:#c8c8c8;font-weight:400;letter-spacing:0px;font-family:'Liberation Serif',serif">A</div>
<div class="t" style="left:972.6px;top:426.57px;font-size:7px;color:#f4f4f4;font-weight:400;letter-spacing:-0.2px">15 pt</div>
<div class="t" style="left:888.9px;top:445.07px;font-size:7px;color:#f4f4f4;font-weight:400;letter-spacing:-0.1px">Métrico</div>
<div class="t" style="left:972px;top:445.07px;font-size:7px;color:#f4f4f4;font-weight:400;letter-spacing:0px">0</div>
<div class="t" style="left:856.6px;top:485.67px;font-size:7px;color:#f0f0f0;font-weight:400;letter-spacing:0px">Párrafo</div>
<div class="t" style="left:856.6px;top:546.67px;font-size:7px;color:#f0f0f0;font-weight:400;letter-spacing:0px">Alinear</div>
<div class="t" style="left:856.6px;top:591.97px;font-size:7px;color:#f0f0f0;font-weight:400;letter-spacing:0px">Marco de texto</div>
<div class="t" style="left:886px;top:609.57px;font-size:7px;color:#f4f4f4;font-weight:400;letter-spacing:0px">1</div>
<div class="a" style="left:939.5px;top:607px;width:24px;height:12px;overflow:hidden">
<div class="t" style="left:1.5px;top:2.57px;font-size:7px;color:#f4f4f4;font-weight:400;letter-spacing:-0.2px">4.233 mm</div>
</div>
<div class="t" style="left:975.5px;top:609.57px;font-size:7px;color:#f0f0f0;font-weight:400;letter-spacing:0px">Opciones</div>
<!-- /PANEL CONTENT -->
<!-- spread -->
<div class="a" style="left:155px;top:149px;width:582px;height:376px;background:#282828"></div>
<div class="a" style="left:154px;top:148px;width:581px;height:375px;background:#e1f1fb"></div>
<svg class="a" style="left:150px;top:140px" width="640" height="390" viewBox="150 140 640 390">
<rect x="444" y="148" width="1" height="375" fill="#8a8f93"/>
<path d="M170.5 164.5 H427.5 M170.5 506.5 H427.5 M461.5 164.5 H717.5 M461.5 506.5 H717.5" stroke="#f088f8" stroke-width="1" fill="none"/>
<path d="M171 164 V507 M461.9 164 V507 M717.7 164 V507" stroke="#c3a0fd" stroke-width="1.6" fill="none"/>
<path d="M427.1 164 V507" stroke="#c648f2" stroke-width="1.5" fill="none"/>
<rect x="171" y="484" width="26" height="22" fill="#000"/>
<path d="M182.3 497.5 L184.2 492.2 L186.1 497.5 M183 496 H185.4" stroke="#e8e8e8" stroke-width="1" fill="none"/>
<rect x="695.5" y="469.5" width="26" height="23" fill="none" stroke="#5a9cf0" stroke-width="1"/>
<rect x="719" y="471" width="53" height="24" fill="rgba(57,57,57,0.4)"/>
<path d="M707.2 473.6 L713.8 479.6 L710.4 479.9 L708.6 482.8 Z" fill="#6a6a6a" stroke="#222" stroke-width="0.7"/>
<path d="M704 472.3 V481 L706.6 478.4 L710.2 478.1 Z" fill="#000" stroke="#fff" stroke-width="0.5"/>
</svg>
<div class="t" style="left:722px;top:475.5px;font-size:7px;color:#e8e8e8;letter-spacing:-0.15px">X: 402.65 mm</div>
<div class="t" style="left:722px;top:485.5px;font-size:7px;color:#e8e8e8;letter-spacing:-0.15px">Y: 239.45 mm</div>

<div class="a" style="left:6px;top:6px;width:1px;height:618px;background:#474747"></div>
<div class="a" style="left:6px;top:623px;width:1018px;height:1px;background:#474747"></div>
</body></html>
